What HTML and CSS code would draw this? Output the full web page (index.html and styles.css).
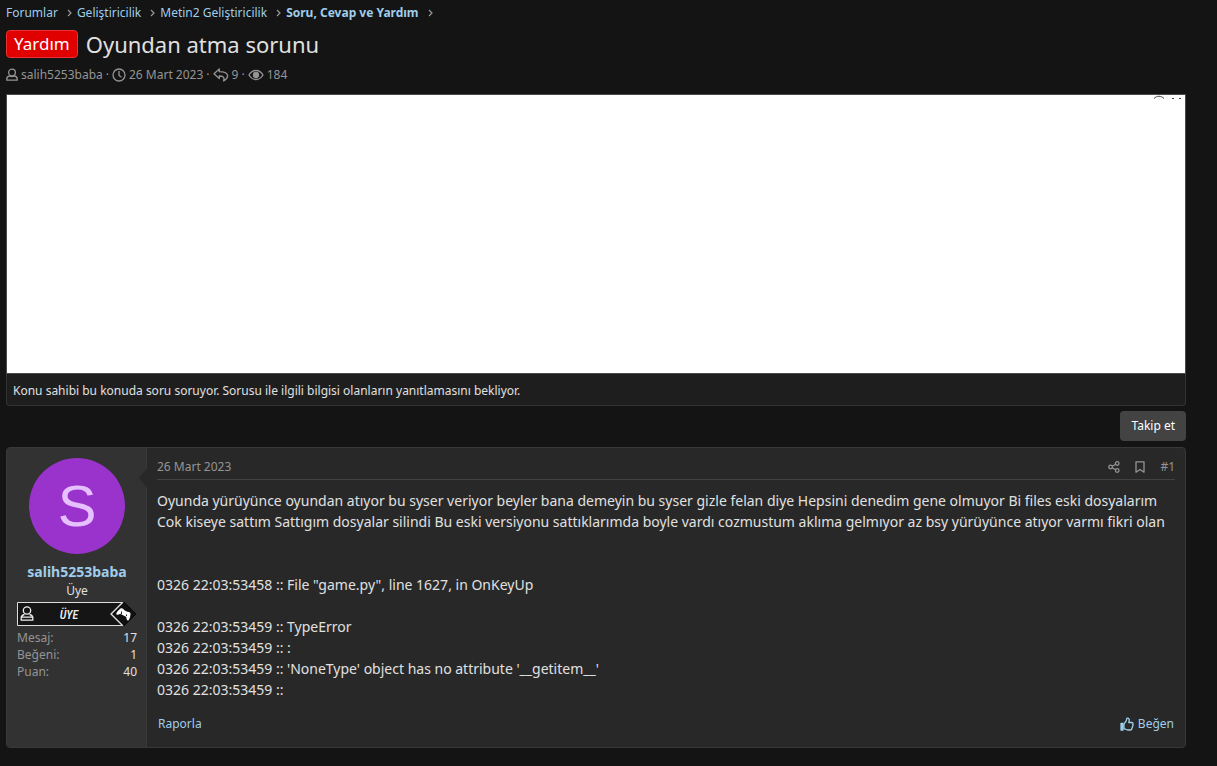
FILE: index.html
```html
<!DOCTYPE html>
<html lang="tr">
<head>
<meta charset="utf-8">
<title>Oyundan atma sorunu</title>
<link rel="stylesheet" href="styles.css">
</head>
<body>
<main class="page">
  <nav class="crumbs" aria-label="Konum">
    <a href="#">Forumlar</a><svg class="chev" viewBox="0 0 6 8"><path d="M1 1l3 3-3 3"/></svg>
    <a href="#">Geliştiricilik</a><svg class="chev" viewBox="0 0 6 8"><path d="M1 1l3 3-3 3"/></svg>
    <a href="#">Metin2 Geliştiricilik</a><svg class="chev" viewBox="0 0 6 8"><path d="M1 1l3 3-3 3"/></svg>
    <a href="#" class="current">Soru, Cevap ve Yardım</a><svg class="chev" viewBox="0 0 6 8"><path d="M1 1l3 3-3 3"/></svg>
  </nav>
  <h1 class="title"><span class="label">Yardım</span><span>Oyundan atma sorunu</span></h1>
  <div class="meta">
    <svg class="icon user" viewBox="0 0 12 14"><circle cx="6" cy="4.5" r="3.4"/><path d="M3.500 8C1.700 8.400.8 9.600.8 11v1.200h10.400V11c0-1.400-.9-2.600-2.700-3-1.500.8-3.500.8-5 0z"/></svg>
    <span>salih5253baba</span><span>·</span>
    <svg class="icon clock" viewBox="0 0 14 14"><circle cx="7" cy="7" r="6"/><path d="M7 3v4.500l2.500 1.700"/></svg>
    <span>26 Mart 2023</span><span>·</span>
    <svg class="icon reply" viewBox="0 0 16 14"><path d="M6.300 1L1 5.800l5.300 4.800V8c4 0 5.400 1.400 4.300 5C16.500 9.500 16.500 4 6.300 3.700z"/></svg>
    <span>9</span><span>·</span>
    <svg class="icon eye" viewBox="0 0 16 12"><path d="M1 6c3.500-6 10.500-6 14 0-3.500 6-10.500 6-14 0z"/><circle cx="8" cy="6" r="2.500" class="solid"/></svg>
    <span>184</span>
  </div>

  <div class="ad"><svg class="ad-marks" viewBox="0 0 30 4"><path d="M1 3.500C4 .5 8 .5 11 3.500M19 3.500h2M26 3.500h2"/></svg></div>
  <div class="notice">Konu sahibi bu konuda soru soruyor. Sorusu ile ilgili bilgisi olanların yanıtlamasını bekliyor.</div>
  <div class="actions"><button type="button" class="follow">Takip et</button></div>

  <article class="post">
    <aside class="member">
      <div class="avatar">S</div>
      <a href="#" class="name">salih5253baba</a>
      <div class="rank">Üye</div>
      <svg class="banner" viewBox="0 0 120 24" role="img" aria-label="Üye">
        <path d="M.5.5h105L94 12l11.500 11.500H.5z" fill="#151515" stroke="#ddd"/>
        <path d="M107.500.5L119 12l-11.500 11.500L96 12z" fill="#111" stroke="#080808"/>
        <path d="M105.500.5L94 12l11.500 11.500" fill="none" stroke="#ddd" stroke-width="1.300"/>
        <g fill="none" stroke="#eee" stroke-width="1.300"><circle cx="10" cy="8.500" r="3.700"/><path d="M7.500 12.500C5 13 4.500 14 4.500 15.500M12.500 12.500c2.500.5 3 1.500 3 3M4.200 15.200h11.600v3H4.200z"/></g>
        <path transform="rotate(28 107 12)" fill="#fff" d="M101.500 8.500c1-1 2.800-.9 3.600 0h3.800c.8-.9 2.600-1 3.600 0 1.100 2.200 1.900 4.600 1.500 6.800-.7 1.200-2.300.7-3.500-1.800h-7c-1.200 2.500-2.800 3-3.500 1.800-.4-2.200.4-4.600 1.500-6.800z"/>
        <path d="M104.500 9.500V12M109.500 12.500V14" stroke="#222"/>
        <text x="52" y="17" text-anchor="middle" class="banner-text">ÜYE</text>
      </svg>
      <dl class="stats">
        <div><dt>Mesaj:</dt><dd>17</dd></div>
        <div><dt>Beğeni:</dt><dd>1</dd></div>
        <div><dt>Puan:</dt><dd>40</dd></div>
      </dl>
    </aside>
    <section class="content">
      <header class="post-head">
        <time datetime="2023-03-26">26 Mart 2023</time>
        <div class="tools">
          <a href="#" aria-label="Paylaş"><svg class="icon share" viewBox="0 0 12 12"><circle cx="2.600" cy="6" r="1.800"/><circle cx="9.200" cy="2.500" r="1.800"/><circle cx="9.200" cy="9.500" r="1.800"/><path d="M4.200 5.200l3.400-1.900M4.200 6.800l3.400 1.900"/></svg></a>
          <a href="#" aria-label="Yer imi"><svg class="icon mark" viewBox="0 0 10 12"><path d="M1 .8h8v10.400L5 8.500l-4 2.700z"/></svg></a>
          <a href="#">#1</a>
        </div>
      </header>
      <div class="body">Oyunda yürüyünce oyundan atıyor bu syser veriyor beyler bana demeyin bu syser gizle felan diye Hepsini denedim gene olmuyor Bi files eski dosyalarım<br>
        Cok kiseye sattım Sattıgım dosyalar silindi Bu eski versiyonu sattıklarımda boyle vardı cozmustum aklıma gelmıyor az bsy yürüyünce atıyor varmı fikri olan<br><br><br>
        0326 22:03:53458 :: File "game.py", line 1627, in OnKeyUp<br><br>
        0326 22:03:53459 :: TypeError<br>
        0326 22:03:53459 :: :<br>
        0326 22:03:53459 :: 'NoneType' object has no attribute '__getitem__'<br>
        0326 22:03:53459 ::</div>
      <footer class="post-foot">
        <a href="#">Raporla</a>
        <a href="#" class="like"><svg class="icon thumb" viewBox="0 0 14 14"><path class="solid" d="M1 6.500h2v6.500H1z"/><path d="M4 6.800C5.800 5.500 6.500 4 7 1.200c2.200-.4 2.800 1.500 1.700 4.300h3c1.300 0 1.700 1.200 1.100 2 .4.700.2 1.400-.4 1.800.3.800 0 1.400-.5 1.700 0 1.300-.7 2-1.700 2H7.500L4 11.600z"/></svg>Beğen</a>
      </footer>
    </section>
  </article>
</main>
</body>
</html>
```
FILE: styles.css
```css
* { box-sizing: border-box; }
body {
  margin: 0;
  background: #141414;
  color: #e0e0e0;
  font-family: "Noto Sans", "Open Sans", sans-serif;
  font-size: 12px;
  line-height: 18px;
}
a { color: #9fcdea; text-decoration: none; }
.page { padding: 4px 31px 18px 6px; }
.icon { fill: none; stroke: currentColor; stroke-width: 1.300; stroke-linejoin: round; }
.icon .solid { fill: currentColor; }

.crumbs { display: flex; align-items: center; }
.chev { width: 6px; height: 8px; margin: 0 4px 0 9px; fill: none; stroke: #999; stroke-width: 1.200; }
.current { font-weight: 700; }

.title {
  display: flex;
  align-items: center;
  gap: 8px;
  margin: 5px 0 0;
  font-size: 22px;
  font-weight: 400;
  line-height: 34px;
}
.label {
  padding: 0 7px;
  border: 1px solid #ea3030;
  border-radius: 4px;
  background: #e00000;
  color: #fff;
  font-size: 17px;
  line-height: 26px;
}
.meta { display: flex; align-items: center; gap: 3px; margin-top: 5px; color: #949494; }
.user { width: 12px; height: 14px; }
.clock { width: 14px; height: 14px; }
.reply { width: 16px; height: 14px; }
.eye { width: 16px; height: 12px; }

.ad { display: flex; justify-content: flex-end; height: 280px; margin-top: 10px; border: 1px solid #4a4a4a; background: #fff; }
.ad-marks { width: 30px; height: 4px; margin-right: 2px; fill: none; stroke: #444; }
.notice { padding: 8px 6px 6px; border: 1px solid #333; border-top: 0; border-radius: 0 0 4px 4px; background: #1e1e1e; line-height: 17px; }
.actions { display: flex; justify-content: flex-end; margin: 5px 0 6px; }
.follow {
  padding: 6px 11px;
  border: 0;
  border-radius: 4px;
  background: #434343;
  color: #fff;
  font: inherit;
}

.post { display: flex; border: 1px solid #383838; border-radius: 4px; background: #282828; }
.member {
  position: relative;
  display: flex;
  flex: 0 0 140px;
  flex-direction: column;
  align-items: center;
  padding: 10px 9px 10px 10px;
  border-right: 1px solid #383838;
  border-radius: 3px 0 0 3px;
  background: #323232;
}
.member::after {
  content: "";
  position: absolute;
  top: 20px;
  right: -1px;
  border: 10px solid transparent;
  border-left: 0;
  border-right: 8px solid #282828;
}
.avatar {
  width: 96px;
  height: 96px;
  border-radius: 50%;
  background: #9933cc;
  color: #e6bfff;
  font: 58px/96px "Liberation Sans", sans-serif;
  text-align: center;
}
.name { margin-top: 8px; font-size: 14px; font-weight: 700; line-height: 20px; }
.rank { line-height: 18px; }
.banner { width: 120px; height: 24px; margin-top: 2px; }
.banner-text { fill: #eee; font: italic 500 12px "Roboto Condensed", Roboto, sans-serif; }
.stats { align-self: stretch; margin: 3px 0 0; line-height: 17px; }
.stats div { display: flex; justify-content: space-between; }
.stats dt { color: #949494; }
.stats dd { margin: 0; }

.content { display: flex; flex: 1; flex-direction: column; min-width: 0; padding: 10px; }
.post-head { display: flex; justify-content: space-between; padding-bottom: 3px; border-bottom: 1px solid #424242; color: #949494; }
.tools { display: flex; gap: 15px; }
.tools a { display: flex; align-items: center; color: #949494; }
.share { width: 12px; height: 12px; }
.mark { width: 10px; height: 12px; }
.body { margin-top: 10px; margin-right: -10px; font-size: 14px; line-height: 21px; }
.post-foot { display: flex; justify-content: space-between; margin-top: 15px; padding: 0 1px 4px; }
.like { display: flex; align-items: center; gap: 4px; }
.thumb { width: 14px; height: 14px; }
```
